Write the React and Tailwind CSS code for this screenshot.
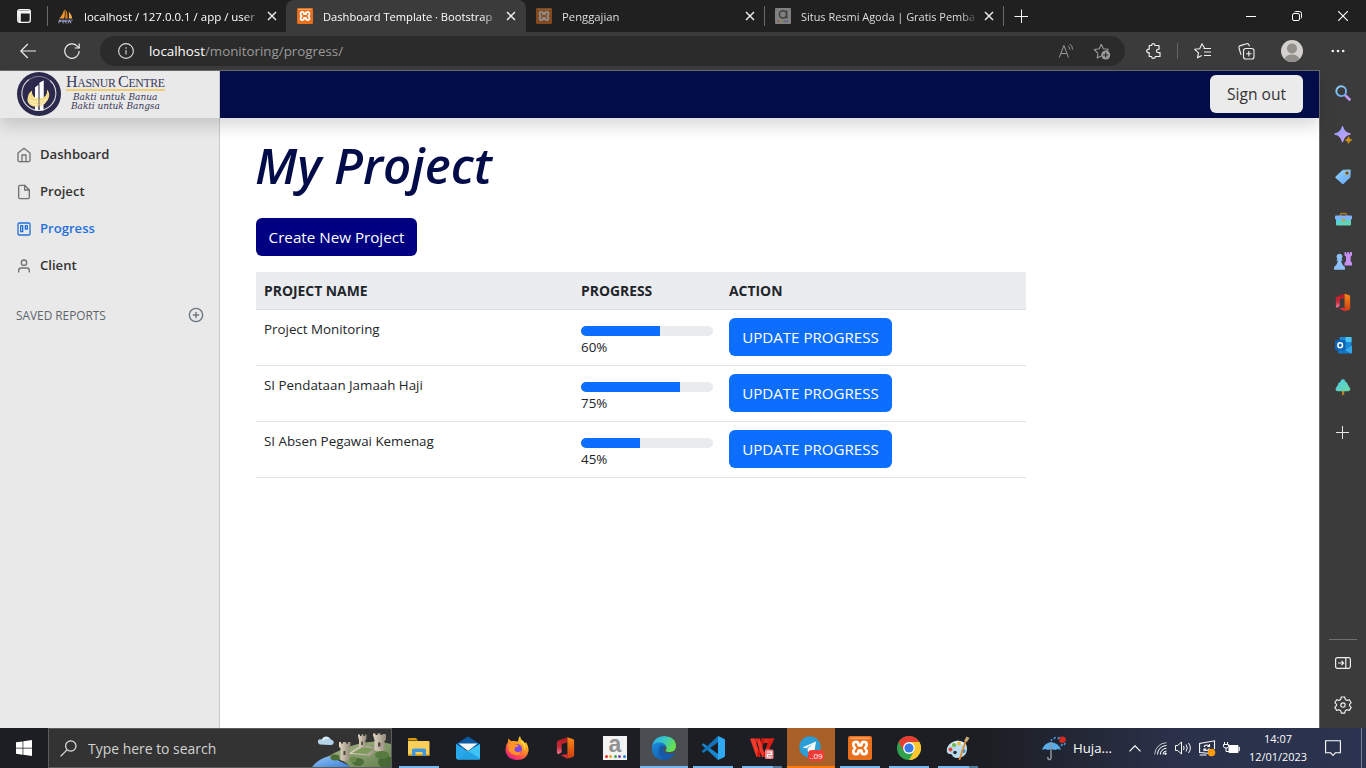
import React from "react";
import { FiHome, FiFile, FiTrello, FiUser, FiPlusCircle } from "react-icons/fi";

/* ---------- shared drawings ---------- */

function XamppIcon({ className }) {
  return (
    <svg viewBox="0 0 24 24" className={className}>
      <rect width="24" height="24" rx="2" fill="#e8701c" />
      <rect x="2.2" y="1.600" width="19.600" height="1.200" fill="#f6b47d" />
      <path
        d="M5.300 8.500Q5.300 5.800 8 5.800 10.600 5.800 10.600 9.300H13.400Q13.400 5.800 16 5.800 18.700 5.800 18.700 8.500 18.700 10.500 17 12 18.700 13.500 18.700 15.500 18.700 18.200 16 18.200 13.400 18.200 13.400 14.700H10.600Q10.600 18.200 8 18.200 5.300 18.200 5.300 15.500 5.300 13.500 7 12 5.300 10.500 5.300 8.500Z"
        fill="none"
        stroke="#fff"
        strokeWidth="2.700"
        strokeLinejoin="round"
      />
    </svg>
  );
}

function PhpMyAdminIcon({ className }) {
  return (
    <svg viewBox="0 0 16 16" className={className}>
      <path d="M6.200 1.500c1 2.500.8 6.500-.2 9H1.200C3.500 8.500 5.500 5 6.200 1.500Z" fill="#f29a2e" />
      <path d="M7 1c2 2 3 6 2.500 9.500H7C7.800 7.500 7.900 4 7 1Z" fill="#e27f12" />
      <path d="M10.500 3.500c2 1.500 3.500 4.500 3.600 7h-3.300c.4-2.500.3-5-.3-7Z" fill="#f7b04f" />
      <path d="M.8 11.500h14.400l-1 2.200H1.600Z" fill="#595c85" />
      <path d="M1 15.200v-2.700h1.600v1.500M5 15.500v-3l1.500 1.500L8 12.500v3M10 15.400l1.500-3 1.500 3" fill="none" stroke="#b4b6d4" strokeWidth=".9" />
    </svg>
  );
}

function AgodaIcon({ className }) {
  return (
    <svg viewBox="0 0 16 16" className={className}>
      <rect width="16" height="16" rx="1" fill="#808080" />
      <circle cx="8" cy="6.300" r="3.600" fill="none" stroke="#3f3f3f" strokeWidth="1.500" />
      <path d="M11.600 2.500v8" stroke="#3f3f3f" strokeWidth="1.500" />
      <circle cx="3.800" cy="13.300" r=".8" fill="#a33" />
      <circle cx="5.900" cy="13.300" r=".8" fill="#b98a2e" />
      <circle cx="8" cy="13.300" r=".8" fill="#3c8a4a" />
      <circle cx="10.100" cy="13.300" r=".8" fill="#64418c" />
      <circle cx="12.200" cy="13.300" r=".8" fill="#2e6fa8" />
    </svg>
  );
}

function OfficeIcon({ className }) {
  return (
    <svg viewBox="0 0 24 24" className={className}>
      <defs>
        <linearGradient id="officeLeft" x1="0" y1="0" x2="0" y2="1">
          <stop offset="0" stopColor="#b5141c" />
          <stop offset=".6" stopColor="#c9303c" />
          <stop offset="1" stopColor="#ef7a9a" />
        </linearGradient>
        <linearGradient id="officeRight" x1="0" y1="0" x2="0" y2="1">
          <stop offset="0" stopColor="#f78a14" />
          <stop offset="1" stopColor="#d13a12" />
        </linearGradient>
      </defs>
      <path d="M14 .8 4.500 4.300A2.500 2.500 0 0 0 3 6.700V16c0 1.200.4 2 1.500 2.500L8 16.500V7.800l6-1.800Z" fill="url(#officeLeft)" />
      <path d="m14 .8 5.500 1.800c1 .3 1.500 1 1.500 2v14.800c0 1-.5 1.700-1.500 2L14 23.200Z" fill="url(#officeRight)" />
      <path d="m7 19.400 7-1v4.800Z" fill="#e32b3c" />
    </svg>
  );
}

/* ---------- browser: tabs ---------- */

function CloseGlyph() {
  return (
    <svg viewBox="0 0 10 10" className="size-[10px] shrink-0">
      <path d="M1 1l8 8M9 1L1 9" stroke="#f2f2f2" strokeWidth="1.400" />
    </svg>
  );
}

function Tab({ icon, active, children }) {
  return (
    <div
      className={
        active
          ? "flex h-8 w-[240px] items-center rounded-t-lg bg-[#3b3b3b] pl-[11px] text-white"
          : "flex h-8 w-[239px] items-center pl-[10px] text-[#dedede]"
      }
    >
      {icon}
      <div className="ml-[10px] w-[177px] whitespace-nowrap pb-[2px] [mask-image:linear-gradient(to_right,black_90%,transparent_100%)]">
        {children}
      </div>
      <div className="ml-[6px] flex">
        <CloseGlyph />
      </div>
    </div>
  );
}

function TabBar() {
  return (
    <div className="flex h-8 items-center bg-[#202020]">
      <svg viewBox="0 0 14 14" className="ml-[17px] size-[14px] shrink-0">
        <rect x=".7" y=".7" width="12.600" height="12.600" rx="2" fill="none" stroke="#f5f5f5" strokeWidth="1.300" />
        <path d="M.7 1.500h12.600v3H3.800v8.800H1.500Z" fill="#f5f5f5" />
      </svg>
      <div className="ml-4 h-5 w-px shrink-0 bg-[#6a6a6a]" />
      <div className="-mr-px">
        <Tab icon={<PhpMyAdminIcon className="size-4 shrink-0" />}>
          <span className="text-[11.470px] text-white">localhost / 127.0.0.1 / app / user</span>
        </Tab>
      </div>
      <Tab active icon={<XamppIcon className="size-4 shrink-0" />}>
        <span className="text-[11.150px]">Dashboard Template · Bootstrap</span>
      </Tab>
      <Tab icon={<XamppIcon className="size-4 shrink-0 opacity-50" />}>
        <span className="text-[11.300px]">Penggajian</span>
      </Tab>
      <div className="-mr-px -ml-px h-5 w-px shrink-0 bg-[#6a6a6a]" />
      <div className="pl-px">
        <Tab icon={<AgodaIcon className="size-4 shrink-0" />}>
          <span className="text-[10.950px]">Situs Resmi Agoda | Gratis Pemba</span>
        </Tab>
      </div>
      <div className="-ml-px h-5 w-px shrink-0 bg-[#6a6a6a]" />
      <svg viewBox="0 0 14 14" className="ml-[10px] size-[14px] shrink-0">
        <path d="M7 0v14M0 7h14" transform="translate(.5 .5)" stroke="#f5f5f5" strokeWidth="1" />
      </svg>
      <svg viewBox="0 0 10 10" className="mr-[36px] ml-auto size-[10px]">
        <path d="M0 5.500h10" stroke="#fff" />
      </svg>
      <svg viewBox="0 0 10 10" className="mr-[36px] size-[10px]">
        <rect x=".5" y="2.500" width="7" height="7" rx="1.500" fill="none" stroke="#fff" />
        <path d="M2.500 1q.3-.5 1-.5h4a2 2 0 0 1 2 2v4q0 .7-.5 1" fill="none" stroke="#fff" />
      </svg>
      <svg viewBox="0 0 10 10" className="mr-[18px] size-[10px]">
        <path d="M0 0l10 10M10 0L0 10" stroke="#fff" strokeWidth="1.100" />
      </svg>
    </div>
  );
}

/* ---------- browser: toolbar ---------- */

function Toolbar() {
  return (
    <div className="flex h-[38px] items-center bg-[#3b3b3b]">
      <svg viewBox="0 0 16 16" className="ml-5 size-4 shrink-0" fill="none" stroke="#ededed" strokeWidth="1.200">
        <path d="M16 8H.8M7.800 1 .8 8l7 7" />
      </svg>
      <svg viewBox="0 0 16 16" className="ml-7 size-4 shrink-0" fill="none" stroke="#ededed" strokeWidth="1.200">
        <path d="M15.200 8A7.200 7.200 0 1 1 13 2.900L15 5" />
        <path d="M15.200.5V5h-4.600" />
      </svg>
      <div className="ml-5 flex h-[30px] w-[1025px] items-center rounded-full bg-[#2b2b2b]">
        <svg viewBox="0 0 16 16" className="ml-[18px] size-4" fill="none" stroke="#dcdcdc" strokeWidth="1.100">
          <circle cx="8" cy="8" r="7.400" />
          <path d="M8 7v4.500M8 4.300v1.400" />
        </svg>
        <div className="ml-[15px] pt-[2px] text-[13.350px] leading-none text-[#9b9b9b]">
          <span className="text-white">localhost</span>/monitoring/progress/
        </div>
        <svg viewBox="0 0 16 16" className="ml-auto size-4" fill="none" stroke="#9a9a9a" strokeWidth="1">
          <path d="M1.300 14.500 5.900 2.500l4.600 12M3 10.500h5.800" />
          <path d="M10 3.200q1.900 1 2 3.400M11.600 1q3 1.800 3 5.500" />
        </svg>
        <svg viewBox="0 0 18 17" className="mr-[14px] ml-[19px] h-[17px] w-[18px]">
          <path
            d="M8.300 1.200 10.300 5.700l5 .6-2 2M5 10.300 1.300 6.500l5-.8 2-4.500M5 10.300l-.8 4.800 3.800-2"
            fill="none"
            stroke="#9a9a9a"
            strokeWidth="1.100"
            strokeLinejoin="round"
          />
          <circle cx="12.700" cy="12" r="4.500" fill="#9a9a9a" />
          <path d="M12.700 9.500v5M10.200 12h5" stroke="#2b2b2b" strokeWidth="1.100" />
        </svg>
      </div>
      <svg viewBox="0 0 16 16" className="ml-[21px] size-4" fill="none" stroke="#f0f0f0" strokeWidth="1.200" strokeLinejoin="round">
        <path d="M3.200 2.500h2.500C5.600 1.200 6.300.6 7.300.6S9 1.200 9 2.500h4v3.700c-1-.1-2.500.3-2.500 1.700s1.400 1.800 2.500 1.700h1v3.900H9.300c.1 1.200-.8 1.900-1.900 1.900s-1.800-.7-1.800-1.900H3.200V9.700C1.500 9.800.7 9 .7 8s.8-1.900 2.500-1.800Z" />
      </svg>
      <div className="ml-[15px] h-4 w-px bg-[#646464]" />
      <svg viewBox="0 0 17 16" className="ml-4 h-4 w-[17px]" fill="none" stroke="#f0f0f0" strokeWidth="1.100" strokeLinejoin="round">
        <path d="M10.500 5 8 .8 5.700 5.700.7 6.300l3.800 3.500-1 5 4.300-2.300M9.500 5.500H17M10 9h7M10 12.500h7" />
      </svg>
      <svg viewBox="0 0 17 17" className="ml-[27px] size-[17px]" fill="none" stroke="#f0f0f0" strokeWidth="1.100" strokeLinejoin="round">
        <rect x="5.500" y="5.500" width="10.500" height="10.500" rx="2.300" />
        <path d="M10.800 8v5.500M8 10.800h5.500M3 11.800 1 5a2 2 0 0 1 1.400-2.400L8.500.8A2 2 0 0 1 11 2l.5 1.300" />
      </svg>
      <svg viewBox="0 0 22 22" className="ml-[26px] size-[22px]">
        <defs>
          <clipPath id="avatarClip">
            <circle cx="11" cy="11" r="11" />
          </clipPath>
        </defs>
        <g clipPath="url(#avatarClip)">
          <rect width="22" height="22" fill="#d3d1ce" />
          <circle cx="11" cy="8.500" r="5" fill="#93908c" />
          <ellipse cx="11" cy="19.500" rx="7.500" ry="5" fill="#93908c" />
        </g>
      </svg>
      <svg viewBox="0 0 14 4" className="ml-[28px] h-1 w-[14px]" fill="#f0f0f0">
        <circle cx="1.800" cy="2" r="1.300" />
        <circle cx="7" cy="2" r="1.300" />
        <circle cx="12.200" cy="2" r="1.300" />
      </svg>
    </div>
  );
}

/* ---------- browser: right rail ---------- */

function RailItem({ children }) {
  return <div className="flex h-[18px] w-[18px] items-center justify-center">{children}</div>;
}

function EdgeRail() {
  return (
    <aside className="flex w-[47px] shrink-0 flex-col items-center border-l border-[#6b6b6b] bg-[#3b3b3b] pt-[14px]">
      <svg width="0" height="0" className="size-0">
        <defs>
          <linearGradient id="railPurple" x1="0" y1="0" x2="1" y2="1">
            <stop offset="0" stopColor="#8aa5ff" />
            <stop offset="1" stopColor="#d79bf5" />
          </linearGradient>
          <linearGradient id="railBlue" x1="0" y1="0" x2="1" y2="1">
            <stop offset="0" stopColor="#8ed4f7" />
            <stop offset="1" stopColor="#6aa4fa" />
          </linearGradient>
          <linearGradient id="railTeal" x1="0" y1="0" x2="1" y2="1">
            <stop offset="0" stopColor="#4fd0ec" />
            <stop offset="1" stopColor="#6bd6a0" />
          </linearGradient>
        </defs>
      </svg>
      <div className="flex flex-col gap-6">
        <RailItem>
          <svg viewBox="0 0 16 16" className="size-4">
            <path d="m10.500 10.500 4 4" stroke="#c298f5" strokeWidth="2.600" strokeLinecap="round" />
            <circle cx="6.200" cy="6.200" r="4.900" fill="none" stroke="url(#railBlue)" strokeWidth="1.900" />
          </svg>
        </RailItem>
        <RailItem>
          <svg viewBox="0 0 16 16" className="size-4 overflow-visible">
            <path d="M7.500-.3Q9 6 15 7q-6 1-7.500 7.500Q6 8 0 7q6-1 7.500-7.300Z" fill="url(#railPurple)" stroke="url(#railPurple)" strokeWidth="1.300" strokeLinejoin="round" />
            <path d="M13.500 9.500q.6 3 3.500 3.500-2.900.5-3.500 3.500Q13 13.500 10 13q3-.5 3.500-3.500Z" fill="#c99219" stroke="#c99219" strokeWidth=".6" />
          </svg>
        </RailItem>
        <RailItem>
          <svg viewBox="0 0 16 16" className="size-4">
            <path d="M8.500.8 14.500.5q1.300 0 1.300 1.300l-.3 5.800q0 .7-.5 1.200l-6.300 6q-.8.8-1.600 0L.7 9q-.8-.8 0-1.600L7.300 1.300q.5-.4 1.200-.5Z" fill="url(#railBlue)" />
            <rect x="10.500" y="2.700" width="2.800" height="2.800" rx=".8" fill="#3b3b3b" stroke="#d39b20" />
          </svg>
        </RailItem>
        <RailItem>
          <svg viewBox="0 0 17 16" className="h-4 w-[17px]">
            <path d="M5.500 5V3.500q0-1 1-1h4q1 0 1 1V5" fill="none" stroke="#ac7a20" strokeWidth="1.400" />
            <path d="M1 8h15v5.500q0 1-1 1H2q-1 0-1-1Z" fill="url(#railTeal)" />
            <rect y="4.500" width="17" height="4" rx="1" fill="#82b2fa" />
            <circle cx="8.500" cy="9.300" r="1.500" fill="#caa02f" />
          </svg>
        </RailItem>
        <RailItem>
          <svg viewBox="0 -1 18 19" className="h-[19px] w-[18px]">
            <path d="M10.500-1h1.700v1.500h1.100V-1h1.700v1.500h1V-1H18v3.500l-1.300 1v4.500L18 10v2.500h-7.500V10L12 8V3.500l-1.500-1Z" fill="#c48ff0" />
            <path d="M5.500.8a2.900 2.900 0 0 1 2 5l1.300 1.800H7.300c0 2.500 1 4.500 3 5.700.7.400.7 3.400.7 3.400H0s0-3 .7-3.400c2-1.200 3-3.200 3-5.700H2.200l1.300-1.800a2.900 2.900 0 0 1 2-5Z" fill="#8ec0fb" />
          </svg>
        </RailItem>
        <RailItem>
          <OfficeIcon className="mb-px h-[19px] w-[20px] shrink-0" />
        </RailItem>
        <RailItem>
          <svg viewBox="0 0 17 17" className="size-[17px]">
            <rect x="4.500" width="12" height="14" rx="1" fill="#1a8ad8" />
            <path d="M10.500 0h6v5h-6Z" fill="#4bc3f5" />
            <path d="M3 9.500 10 13l7-4.500V15q0 1.500-1.500 1.500h-11Q3 16.500 3 15Z" fill="#1577c9" />
            <path d="M10 13l7-4.500V15q0 1.500-1.500 1.500Z" fill="#31a9e8" />
            <rect y="3" width="10.500" height="10.500" rx="1.200" fill="#0a63b5" />
            <ellipse cx="5.200" cy="8.200" rx="2.300" ry="2.500" fill="none" stroke="#fff" strokeWidth="1.500" />
          </svg>
        </RailItem>
        <RailItem>
          <svg viewBox="0 0 16 17" className="h-[17px] w-4">
            <path d="M7 11h2.200v4.500q-1 1.600-2.200 0Z" fill="#b8801e" />
            <path d="M8 .3q1.200 0 2 1l.6 1.800q2 .3 2.200 2.400l1.700 2.700q1 1.300.8 2.300-.5 1.700-2.300 1.800H2.800Q.8 12 .6 10.500q-.2-1 .8-2.300l1.700-2.700Q3.300 3.500 5.400 3.100L6 1.300q.8-1 2-1Z" fill="url(#railTeal)" />
          </svg>
        </RailItem>
      </div>
      <svg viewBox="0 0 13 13" className="mt-[30px] mr-px size-[13px] shrink-0">
        <path d="M6.500 0v13M0 6.500h13" stroke="#e6e6e6" />
      </svg>
      <div className="mt-auto h-px w-7 shrink-0 bg-[#6f6f6f]" />
      <svg viewBox="0 0 16 12" className="mt-[17px] h-3 w-4 shrink-0" fill="none" stroke="#f0f0f0" strokeWidth="1.200">
        <rect x=".6" y=".6" width="14.800" height="10.800" rx="1.800" />
        <path d="M10.800.6v10.800M3 6h5.500M6.500 3.800 8.600 6 6.500 8.200" />
      </svg>
      <svg viewBox="0 0 18 18" className="mt-[27px] mb-[14px] size-[18px] shrink-0" fill="none" stroke="#f0f0f0" strokeWidth="1.150" strokeLinejoin="round">
        <path d="M7.300 1h3.400l.6 2.400 1.700 1L15.300 3.700l1.900 3L15.500 8.400v1.300l1.700 1.700-1.900 3-2.300-.7-1.700 1-.6 2.400H7.300l-.6-2.400-1.700-1-2.300.7-1.900-3 1.700-1.700V8.400L.8 6.700l1.900-3 2.300.7 1.700-1Z" />
        <circle cx="9" cy="9" r="2.200" />
      </svg>
    </aside>
  );
}

/* ---------- dashboard page ---------- */

function HasnurLogo() {
  return (
    <div className="flex h-[47px] w-[220px] shrink-0 items-start border-r border-[#c6c6c6] bg-[#e9e9e9] pl-[17px]">
      <svg viewBox="0 0 44 46" className="h-[46px] w-[44px] shrink-0">
        <circle cx="22" cy="23" r="22" fill="#2b2a4c" />
        <path d="M12 8.500A17 17 0 1 0 33 9.500" fill="none" stroke="#d8d8df" strokeWidth="1.100" />
        <path d="M12 8.500A17 17 0 0 1 33 9.500" fill="none" stroke="#d8d8df" strokeWidth=".5" />
        <path d="M18 16.500 21.500 14v25.500H18ZM22.500 12 26.500 9.500v30h-4Z" fill="#fbfbfb" />
        <path d="M15 19.500Q14.500 24 18 26.500q6 2.500 10.500-1.500Q30.500 22 30 18.500q3.500 4 1.500 9-3 6.500-9.500 8-8.500 1.500-11.500-5Q10 23 15 19.500Z" fill="#f5dd8c" />
        <path d="M11.500 28.500q8 5.500 19 0M12.500 31.500q8 4.500 16 0" stroke="#fff6d2" fill="none" strokeWidth=".8" />
        <path d="M18 16.500 21.500 14v13H18ZM22.500 12 26.500 9.500V26l-4 1Z" fill="#fbfbfb" />
        <path d="M22 13v26" stroke="#2b2a4c" strokeWidth=".7" />
      </svg>
      <div className="ml-[5px] w-[99px] font-['Liberation_Serif'] whitespace-nowrap text-[#3b3a58]">
        <div className="h-[20px] border-b-2 border-[#f0cf72] pt-px text-[11.800px] leading-[19px] tracking-[-0.350px]">
          <span className="text-[16px]">H</span>ASNUR <span className="text-[16px]">C</span>ENTRE
        </div>
        <div className="mt-[2px] pl-[7px] font-['DejaVu_Serif'] text-[9px] leading-[9px] tracking-[-0.050px] italic">Bakti untuk Banua</div>
        <div className="pl-[5px] font-['DejaVu_Serif'] text-[9px] leading-[9px] tracking-[-0.050px] italic">Bakti untuk Bangsa</div>
      </div>
    </div>
  );
}

function NavItem({ icon: Icon, active, children }) {
  return (
    <li
      className={
        active
          ? "flex h-[37px] items-center text-[13.100px] font-semibold text-[#2470dc]"
          : "flex h-[37px] items-center text-[13.100px] font-semibold text-[#333]"
      }
    >
      <Icon className={active ? "size-4" : "size-4 text-[#727272]"} />
      <span className="ml-2">{children}</span>
    </li>
  );
}

function ProgressRow({ name, value }) {
  return (
    <div className="grid h-14 grid-cols-[317px_148px_305px] border-b border-[#dee2e6] text-[13.350px] leading-[21px] text-[#212529]">
      <div className="px-2 pt-[9px]">{name}</div>
      <div className="px-2 pt-4">
        <div className="h-[10px] overflow-hidden rounded-md bg-[#e9ecef]">
          <div className="h-full bg-[#0d6efd]" style={{ width: `${value}%` }} />
        </div>
        <div className="pt-px">{value}%</div>
      </div>
      <div className="px-2 pt-2">
        <button className="h-[38px] w-[163px] rounded-md bg-[#0d6efd] text-[15.100px] text-white">UPDATE PROGRESS</button>
      </div>
    </div>
  );
}

function Dashboard() {
  return (
    <div className="flex min-w-0 flex-1 flex-col bg-white">
      <header className="relative z-10 flex h-[47px] shrink-0 bg-[#020c49] shadow-[0_8px_16px_rgba(0,0,0,0.15)]">
        <HasnurLogo />
        <button className="mt-1 mr-4 ml-auto h-[38px] w-[93px] rounded-md bg-[#ebebeb] pt-[2px] text-[15.600px] text-[#333]">Sign out</button>
      </header>
      <div className="flex flex-1">
        <nav className="w-[220px] shrink-0 border-r border-[#c9c9c9] bg-[#e9e9e9] px-4 pt-[18px]">
          <ul>
            <NavItem icon={FiHome}>Dashboard</NavItem>
            <NavItem icon={FiFile}>Project</NavItem>
            <NavItem icon={FiTrello} active>Progress</NavItem>
            <NavItem icon={FiUser}>Client</NavItem>
          </ul>
          <div className="mt-[21px] flex items-center justify-between text-[11.850px] text-[#5f666d]">
            <span className="pt-[2px]">SAVED REPORTS</span>
            <FiPlusCircle className="-mr-px size-4 text-[#6c757d]" />
          </div>
        </nav>
        <main className="pl-9">
          <h1 className="mt-[17px] -ml-px h-[61px] text-[49.200px] leading-[60px] font-semibold text-[#020c49] italic">My Project</h1>
          <button className="mt-[22px] block h-[38px] w-[161px] rounded-md bg-[#000080] text-[15.200px] text-white">Create New Project</button>
          <div className="mt-4 w-[770px]">
            <div className="grid h-[38px] grid-cols-[317px_148px_305px] items-center border-b border-[#dcdee2] bg-[#ebecf0] pt-[2px] text-[13.900px] font-bold text-[#212529]">
              <div className="px-2">PROJECT NAME</div>
              <div className="px-2">PROGRESS</div>
              <div className="px-2">ACTION</div>
            </div>
            <ProgressRow name="Project Monitoring" value={60} />
            <ProgressRow name="SI Pendataan Jamaah Haji" value={75} />
            <ProgressRow name="SI Absen Pegawai Kemenag" value={45} />
          </div>
        </main>
      </div>
    </div>
  );
}

/* ---------- taskbar ---------- */

function TaskButton({ state, children }) {
  return (
    <div
      className={
        state === "active"
          ? "flex h-10 w-12 flex-col items-center bg-[#4a4d51]"
          : state === "alert"
            ? "flex h-10 w-12 flex-col items-center bg-[#a85f28]"
            : "flex h-10 w-12 flex-col items-center"
      }
    >
      <div className="flex h-[38px] items-center pt-[2px]">{children}</div>
      {state === "active" && <div className="h-[2px] w-full bg-[#76b9ed]" />}
      {state === "alert" && <div className="h-[2px] w-full bg-[#ff7a0a]" />}
      {state === "open" && <div className="h-[2px] w-10 bg-[#76b9ed]" />}
      {state === "multi" && (
        <div className="flex h-[2px] w-10 bg-[#547a99]">
          <div className="mr-px h-full w-[31px] bg-[#76b9ed]" />
        </div>
      )}
    </div>
  );
}

function CastleArt() {
  return (
    <svg viewBox="0 0 79 38" className="ml-auto h-[38px] w-[79px]">
      <defs>
        <linearGradient id="castleLand" x1="0" y1="0" x2="1" y2="1">
          <stop offset="0" stopColor="#a9b889" />
          <stop offset="1" stopColor="#64804f" />
        </linearGradient>
        <linearGradient id="castleStone" x1="0" y1="0" x2="1" y2="0">
          <stop offset="0" stopColor="#e5d9c5" />
          <stop offset="1" stopColor="#93897b" />
        </linearGradient>
        <linearGradient id="castleSea" x1="0" y1="0" x2="1" y2="1">
          <stop offset="0" stopColor="#90c5f5" />
          <stop offset="1" stopColor="#3f80d8" />
        </linearGradient>
      </defs>
      <path d="M0 38Q6 30 17 27L40 38Z" fill="url(#castleSea)" />
      <path d="M17 27Q32 18 50 14l16-2 13 3v23H38Q32 30 17 28Z" fill="url(#castleLand)" />
      <path d="m36 25 13-9 18 3-9 8-16-2Z" fill="url(#castleStone)" />
      <path d="m40 24 11-6 11 2-7 5Z" fill="#7d9a58" />
      <path d="M27 14.500V13h2v1.500h2V13h3v1.500h2V13h2.500v5l-1 1v12q-5 2-9 0V19l-1.500-1Z" fill="url(#castleStone)" />
      <path d="M46 7V5.500h2V7h1.500V5.500h2V7H53V5.500h1.500V10l-1 1v7.500H47V11Z" fill="url(#castleStone)" />
      <path d="M61 6V4.500h2.500V6h2V4.500h3V6h2V5H74v5.500L72.500 12v10q-5 2-10-1V11Z" fill="url(#castleStone)" />
      <path d="M31.500 22h2v4h-2ZM49.300 12.500h1.700V16h-1.700ZM66 13.500h2.500v4H66Z" fill="#4d473f" />
      <ellipse cx="23" cy="28.500" rx="4.500" ry="3" fill="#4c6c35" />
      <ellipse cx="46" cy="33" rx="6" ry="4" fill="#4d6e38" />
      <ellipse cx="41" cy="30.500" rx="3.500" ry="3" fill="#6c8a4b" />
      <ellipse cx="74" cy="33" rx="8" ry="6" fill="#466a35" />
      <ellipse cx="70" cy="26" rx="7" ry="4" fill="#557b3e" />
      <path d="M8 15.500q-2.500-1-2-4 1-2 4-1 1-3.500 5-3 3 1 4 3 3.500 1 2.500 4-1 2-4 1.500Z" fill="#b4d3e9" />
      <path d="M10.500 11q2-3 6-2" stroke="#eff8ff" fill="none" strokeWidth="1.500" />
    </svg>
  );
}

function TaskIcons() {
  return (
    <div className="ml-[3px] flex gap-px">
      <TaskButton state="open">
        <svg viewBox="0 0 22 20" className="h-5 w-[22px]">
          <path d="M0 1q0-1 1-1h7l2 2.500H0Z" fill="#d99a0b" />
          <path d="M0 3h20.500q1 0 1 1v13.500H0Z" fill="#f9cf5a" />
          <path d="M0 16h21.500v1.500H0Z" fill="#e3ab25" />
          <path d="M4 18v-6q0-1.500 1.500-1.500h11q1.500 0 1.500 1.500v6h-3.500v-4h-7v4Z" fill="#3f97dc" />
        </svg>
      </TaskButton>
      <TaskButton>
        <svg viewBox="0 0 24 24" className="size-6">
          <path d="m0 8 12-7.500L24 8v5H0Z" fill="#0c59a4" />
          <path d="M2.500 7.500h19L12 15Z" fill="#f3f7fa" />
          <path d="M0 8l24 15H1q-1 0-1-1Z" fill="#28a8ea" />
          <path d="M24 8 12 15 1 23.500h22q1 0 1-1Z" fill="#3fc3f5" />
          <path d="m12 15 12 7.500q0 1-1 1H1Z" fill="#22a0e4" />
        </svg>
      </TaskButton>
      <TaskButton>
        <svg viewBox="0 0 24 24" className="size-6">
          <defs>
            <linearGradient id="foxBody" x1=".8" y1="0" x2=".2" y2="1">
              <stop offset="0" stopColor="#ffe03a" />
              <stop offset=".4" stopColor="#ff9a1f" />
              <stop offset=".75" stopColor="#fb4752" />
              <stop offset="1" stopColor="#d3148f" />
            </linearGradient>
          </defs>
          <path d="M15 0q.3 3 3 5l2 2.500 1-1.500q3 5 2.500 9-1.500 9-11.500 9T.5 14.500Q.3 9 3 6l.2-3.500L6 5h3l4 .5Q13 2 15 0Z" fill="url(#foxBody)" />
          <circle cx="12" cy="13" r="5" fill="#8446e2" />
          <path d="M3.500 7.500q4-1.500 6 .5l4 1q-.5 2-3.500 2.500-1.500 3 1.500 4.500 3 .5 4.500-1-1 5-5.500 4-5.500-1-7-5Z" fill="#ff922b" />
          <path d="M15 5q5 3 4 10 3-6-1-10Z" fill="#ffdf43" />
        </svg>
      </TaskButton>
      <TaskButton>
        <OfficeIcon className="mr-px h-6 w-[23px]" />
      </TaskButton>
      <TaskButton>
        <div className="flex h-6 w-6 flex-col items-center bg-[#f2f2f2]">
          <span className="h-[17px] font-['Liberation_Sans'] text-[23px] leading-[16px] font-bold text-[#929292]">a</span>
          <div className="mt-[2px] flex gap-[1.500px]">
            <i className="size-[3px] rounded-full bg-[#e12d2d]" />
            <i className="size-[3px] rounded-full bg-[#efa11e]" />
            <i className="size-[3px] rounded-full bg-[#35a84f]" />
            <i className="size-[3px] rounded-full bg-[#8347a9]" />
            <i className="size-[3px] rounded-full bg-[#2683d2]" />
          </div>
        </div>
      </TaskButton>
      <TaskButton state="active">
        <svg viewBox="0 0 24 24" className="size-6">
          <defs>
            <linearGradient id="edgeTop" x1="0" y1="0" x2="1" y2=".4">
              <stop offset="0" stopColor="#2ba6e6" />
              <stop offset=".5" stopColor="#37c6c9" />
              <stop offset="1" stopColor="#66e04f" />
            </linearGradient>
            <linearGradient id="edgeLow" x1="0" y1="0" x2="1" y2="1">
              <stop offset="0" stopColor="#1b8de0" />
              <stop offset="1" stopColor="#114f9e" />
            </linearGradient>
          </defs>
          <path d="M0 12Q0 6 5 5q9 0 9 6-1.500 1.500-1.500 3 1 4 6.500 4 2.200 0 3.800-1Q19.500 24 12 24 0 23.500 0 12Z" fill="url(#edgeLow)" />
          <path d="M.2 10Q2 0 12.500 0 24 1 24 10.500q-.3 5-6 5.500-4 0-4.500-1.500 1.500-1.200 1-3.500Q13 6.500 7.500 6.500 2 6.500.2 10Z" fill="url(#edgeTop)" />
          <path d="M8.500 9.500q-4 7 1 12l3 2.300q7 0 10.300-6.800-3.500 2-7.500 1-6-2-3-7-2-2-3.800-1.500Z" fill="#155ba9" />
          <path d="M12.300 11.300q1 1.400-.3 3.200.5 1.800 1.800 2.700-2.800-2.200-1.500-5.900Z" fill="#4a4d51" stroke="#4a4d51" strokeWidth="1.200" />
        </svg>
      </TaskButton>
      <TaskButton state="open">
        <svg viewBox="0 0 24 24" className="size-6">
          <path d="M17 0v24L.7 8.800 2.400 7.200 17 18Z" fill="#1787d2" />
          <path d="M17 0v6.200L2.400 17 .7 15.200Z" fill="#1273ba" />
          <path d="m17 0 6 2.800q1 .4 1 1.400v15.600q0 1-1 1.400L17 24Z" fill="#2fa8f2" />
        </svg>
      </TaskButton>
      <TaskButton state="multi">
        <svg viewBox="0 0 24 22" className="h-[22px] w-6">
          <path d="M12 1.500h12l-1.500 4.500H14Z" fill="#e6271c" />
          <path d="M0 1.500h5L10.500 20h-4Z" fill="#f23a2b" />
          <path d="M11 1.500h4L9.500 20h-3Z" fill="#c9180f" />
          <path d="M5 1.500h5v4H6Z" fill="#e6271c" />
          <path d="m9.500 1.500 6 18.500H12L7.500 6Z" fill="#f23a2b" />
          <path d="M19.500 1.500H24L16 20h-3.500Z" fill="#d91d13" />
          <rect x="15" y="12.500" width="8.500" height="9.500" rx="1.500" fill="#ef8586" />
          <path d="M17 15h4.500v2.500h-4v2.500h4" fill="none" stroke="#fff" strokeWidth="1.100" />
        </svg>
      </TaskButton>
      <TaskButton state="alert">
        <div className="relative">
          <svg viewBox="0 0 24 24" className="size-6">
            <circle cx="11" cy="11" r="10.700" fill="#2b9ed8" />
            <path d="m3.500 11.500 13.500-6-2 12-4-3-2 2-.5-4 6-5-7.500 4.700Z" fill="#fff" />
          </svg>
          <span className="absolute top-[14px] left-[9px] flex h-[11px] w-4 items-center justify-center rounded-sm bg-[#ef3b36] text-[8px] text-white">..09</span>
        </div>
      </TaskButton>
      <TaskButton state="open">
        <XamppIcon className="size-6" />
      </TaskButton>
      <TaskButton state="open">
        <svg viewBox="0 0 24 24" className="size-6">
          <circle cx="12" cy="12" r="12" fill="#2fa24d" />
          <path d="M1.600 6A12 12 0 0 1 22.400 6H12Z" fill="#e63d31" />
          <path d="M1.600 6 6.800 15 12 12V6Z" fill="#e63d31" />
          <path d="M22.400 6A12 12 0 0 1 12 24l5.200-9L12 6Z" fill="#fcc72e" />
          <circle cx="12" cy="12" r="5.900" fill="#fff" />
          <circle cx="12" cy="12" r="4.600" fill="#3878e8" />
        </svg>
      </TaskButton>
      <TaskButton state="multi">
        <svg viewBox="0 0 24 24" className="size-6">
          <path d="M1 12Q4 5 12 4.500q8 .5 9 7 .5 6-4 9-7 3-10 0-1-3-3-2.500Q0 18 1 12Z" fill="#b9dcef" />
          <path d="M2 11Q6 5.500 12 5.500q6 .5 8 5-4-3-9-3-6 0-9 3.500Z" fill="#edf8fd" />
          <circle cx="4.500" cy="13.500" r="2" fill="#e04a35" />
          <circle cx="8" cy="9" r="2" fill="#70b843" />
          <circle cx="13" cy="7.500" r="2" fill="#eebb38" />
          <circle cx="9" cy="16.500" r="1.800" fill="#2b313b" />
          <circle cx="17.500" cy="15" r="2" fill="#468ad6" />
          <path d="m20 4-6.500 19.500" stroke="#df8b31" strokeWidth="1.800" strokeLinecap="round" />
          <path d="m18.300 4.500 2.500 1.500 2.700-4L20.500.5Z" fill="#caaa77" />
        </svg>
      </TaskButton>
    </div>
  );
}

function Tray() {
  return (
    <div className="ml-auto flex h-10 items-center text-white">
      <svg viewBox="0 0 26 25" className="h-[25px] w-[26px]">
        <path d="m13 3 1.500-2M17 3l1.500-2M20 10l1.500-2M23 9l1.500-2M10 5l1-2" stroke="#4a9ce0" strokeWidth="1.400" />
        <path d="M1 14Q3 7 10 6q8 1 10 8l-3-1-3 1-4-1-3 1-3-1Z" fill="#58abe8" />
        <path d="M10 6v16q-.3 2-2 1.500-1.500-.5-1-2.500" fill="none" stroke="#8d959c" strokeWidth="1.500" />
        <circle cx="21.500" cy="3.700" r="3.300" fill="#d32a20" />
      </svg>
      <span className="ml-[6px] w-[41px] pt-px text-[13.200px]">Huja...</span>
      <svg viewBox="0 0 12 7" className="ml-[15px] h-[7px] w-3" fill="none" stroke="#fff" strokeWidth="1.200">
        <path d="m.5 6.300 5.500-5.500 5.500 5.500" />
      </svg>
      <svg viewBox="0 0 13 13" className="ml-[13px] size-[13px]" fill="none" stroke="#fff">
        <path d="M.7 12.500A12 12 0 0 1 12.500.7" opacity=".7" />
        <path d="M3.500 12.500a9 9 0 0 1 9-9M6.300 12.500a6.200 6.200 0 0 1 6.200-6.200M9 12.500a3.500 3.500 0 0 1 3.500-3.500" />
        <circle cx="11.500" cy="11.700" r=".8" fill="#fff" />
      </svg>
      <svg viewBox="0 0 17 14" className="ml-[8px] h-[14px] w-[17px]" fill="none" stroke="#fff">
        <path d="M.5 4.500h2.200L6.500 1v12L2.700 9.500H.5Z" />
        <path d="M8.500 5q1.300 2 0 4M11 3.500q2.500 3.500 0 7M13.500 2q3.700 5 0 10" />
      </svg>
      <svg viewBox="0 0 17 17" className="ml-[7px] size-[17px]" fill="none" stroke="#fff" strokeWidth="1.100">
        <path d="M9 13.200.6 12.500V3.500L15.500.8V9M.6 15h7" />
        <path d="M5 7q.5-2 3-2 1.700 0 2.300 1.300M10.500 4v2.500H8.300M10.300 8.500q-.5 2-2.800 2-1.500 0-2-1M5 11.300V9h2.300" />
        <circle cx="12.500" cy="12.500" r="3.800" fill="#ff9a0a" stroke="none" />
      </svg>
      <svg viewBox="0 0 17 12" className="ml-[7px] h-3 w-[17px]" fill="none" stroke="#fff">
        <path d="M1.500 0v2.500M4.500 0v2.500M.5 2.500h5v2q0 1.500-2.500 1.500T.5 4.500ZM3 6v3.500h3" />
        <path d="M6 3.500h9v7H6Z" fill="#fff" />
        <path d="M16.300 5v4" />
      </svg>
      <div className="mb-px ml-[7px] flex w-[62px] flex-col items-center text-[10.950px] leading-[18px]">
        <span>14:07</span>
        <span>12/01/2023</span>
      </div>
      <svg viewBox="0 0 16 17" className="ml-[16px] h-[17px] w-4" fill="none" stroke="#fff" strokeWidth="1.100">
        <path d="M.6.8h14.800v12H10.300L8 15.500l-2.300-2.700H.6Z" />
      </svg>
      <div className="mr-1 ml-5 h-10 w-px bg-[#7b8090]" />
    </div>
  );
}

function Taskbar() {
  return (
    <footer className="flex h-10 items-center bg-[linear-gradient(to_right,#1c1e23_0%,#1c1e23_72%,#2a3149_86%,#2b3350_100%)]">
      <svg viewBox="0 0 16 16" className="ml-4 size-4 shrink-0" fill="#fff">
        <path d="M0 2.300 6.600 1.400v6.300H0ZM7.300 1.300 16 0v7.700H7.300ZM0 8.400h6.600v6.300L0 13.800ZM7.300 8.400H16V16l-8.700-1.200Z" />
      </svg>
      <div className="ml-4 flex h-10 w-[344px] shrink-0 items-center border border-[#5c5c5c] bg-[#333] text-[#d2d2d2]">
        <svg viewBox="0 0 17 17" className="ml-[11px] size-[17px]" fill="none" stroke="#e6e6e6" strokeWidth="1.200">
          <circle cx="10.800" cy="6" r="5.200" />
          <path d="M7 9.800.6 16.300" />
        </svg>
        <span className="ml-[11px] pt-[2px] text-[13.950px]">Type here to search</span>
        <CastleArt />
      </div>
      <TaskIcons />
      <Tray />
    </footer>
  );
}

export default function App() {
  return (
    <div className="flex h-[768px] w-[1366px] flex-col overflow-hidden bg-[#202020] font-['Open_Sans',sans-serif]">
      <TabBar />
      <Toolbar />
      <div className="flex min-h-0 flex-1 bg-[#3b3b3b]">
        <div className="flex min-w-0 flex-1 border-t border-[#6b6b6b]">
          <Dashboard />
        </div>
        <EdgeRail />
      </div>
      <Taskbar />
    </div>
  );
}
